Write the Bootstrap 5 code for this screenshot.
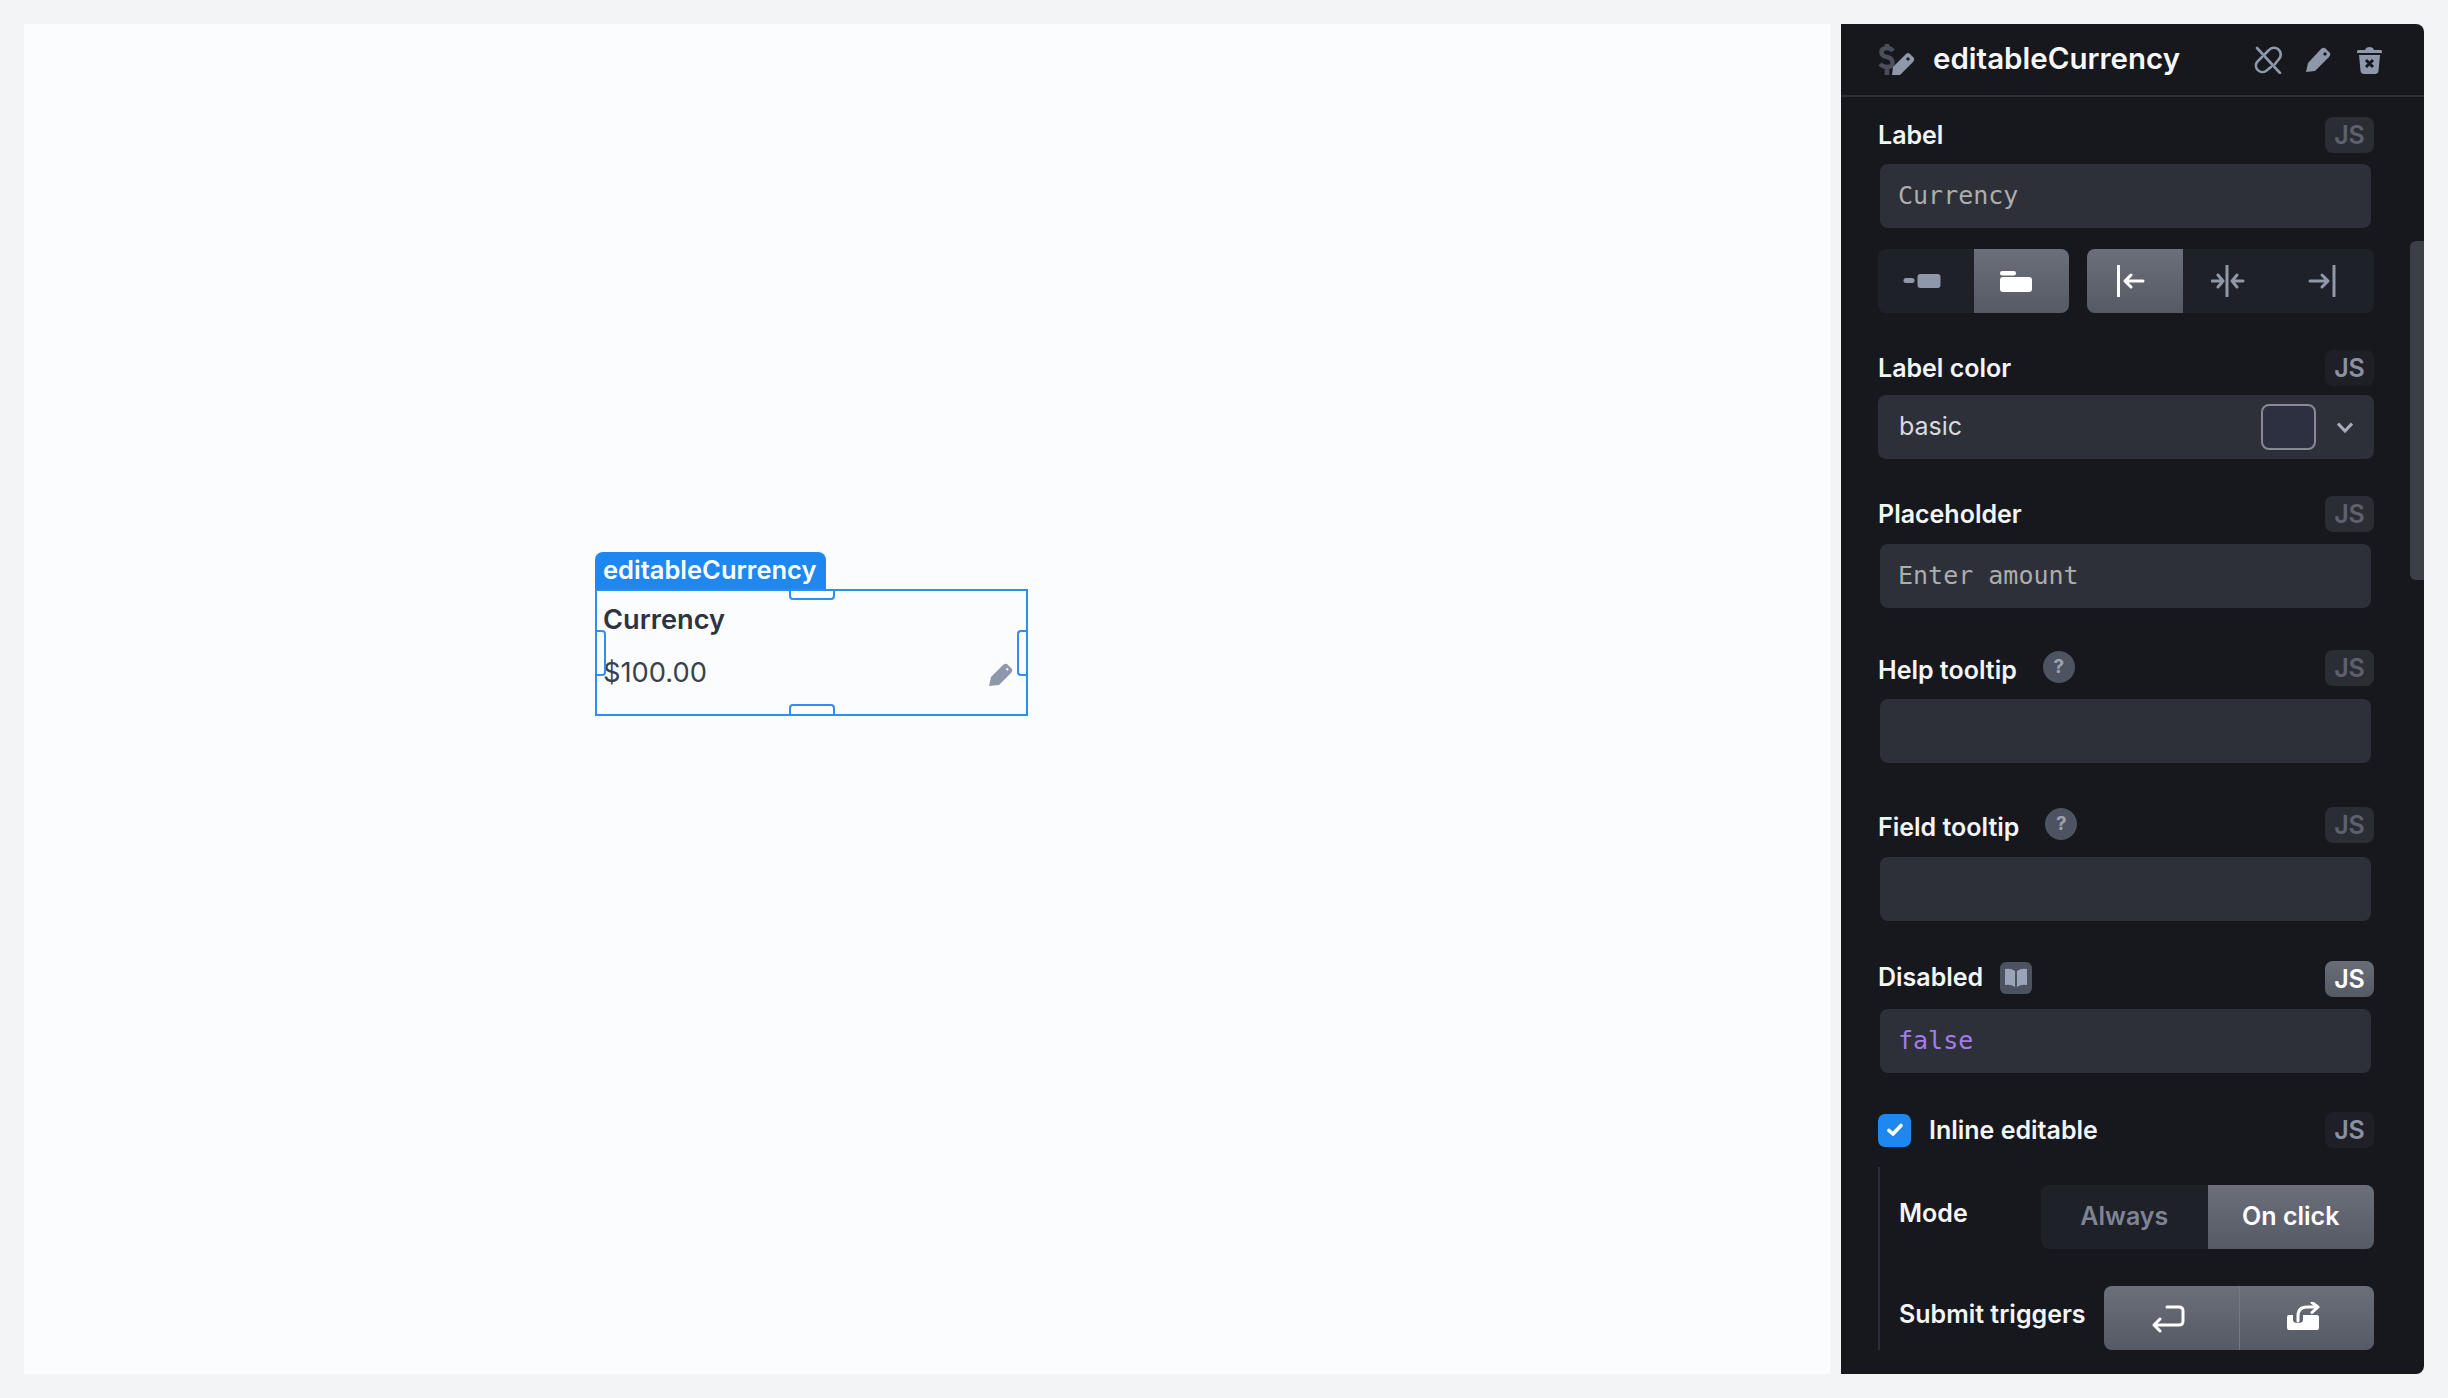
<!DOCTYPE html>
<html lang="en">
<head>
  <meta charset="UTF-8" />
  <title>editableCurrency</title>
  <link href="https://cdn.jsdelivr.net/npm/bootstrap@5.3.0/dist/css/bootstrap.min.css" rel="stylesheet"/>
  <style>
    html, body { height: 100%; }
    body {
      background: #f3f4f6;
      font-family: "Inter", "Liberation Sans", sans-serif;
      overflow: hidden;
    }
    .shell { height: 1398px; padding: 24px; gap: 11px; }
    .canvas-area { width: 1806px; background: #fbfcfe; position: relative; }

    /* widget on the canvas */
    .wd-tag {
      position: absolute; left: 571px; top: 528px; width: 231px; height: 37px;
      background: #1e88f0; color: #fff; font-size: 25.5px; font-weight: 600;
      border-radius: 8px 8px 0 0; padding-left: 8px; line-height: 36px;
    }
    .wd-box {
      position: absolute; left: 571px; top: 565px; width: 433px; height: 127px;
      border: 2px solid #2f8ef0; color: #2d3440; padding-left: 7px;
    }
    .wd-label { font-size: 27.2px; font-weight: 600; line-height: 32px; margin-top: 13px; margin-left: -1px; }
    .wd-value { font-size: 27.3px; line-height: 32px; margin-top: 21px; color: #3a404c; margin-left: -1px; }
    .wd-pencil { position: absolute; right: 13px; top: 72px; }
    .wd-grip { position: absolute; background: #fff; border: 2px solid #2f8ef0; border-radius: 4px; }
    .grip-top { left: 192px; top: 0; width: 46px; height: 9px; border-top: 0; border-radius: 0 0 4px 4px; }
    .grip-bottom { left: 192px; bottom: 0; width: 46px; height: 10px; border-bottom: 0; border-radius: 4px 4px 0 0; }
    .grip-left { left: 0; top: 39px; width: 9px; height: 46px; border-left: 0; background: transparent; border-radius: 0 4px 4px 0; }
    .grip-right { right: 0; top: 39px; width: 9px; height: 46px; border-right: 0; border-radius: 4px 0 0 4px; }

    /* right panel */
    .side-panel {
      width: 583px; background: #16181d; color: #f4f5f7; position: relative;
      border-radius: 0 8px 8px 0; overflow: hidden;
    }
    .panel-top {
      height: 73px; border-bottom: 2px solid #2b2f38; padding: 0 42px 0 37px;
    }
    .panel-title { font-size: 29.5px; font-weight: 600; margin: -2px 0 0 18px; color: #f6f7f8; }
    .panel-body { padding: 20px 50px 0 37px; }
    .scroll-thumb {
      position: absolute; right: 0; top: 217px; width: 14px; height: 339px;
      background: #3c3f47; border-radius: 6px 0 0 6px;
    }
    .prop-head { height: 36px; }
    .prop-name { font-size: 25px; font-weight: 600; line-height: 30px; }
    .name-low { margin-top: 4px; }
    .name-high { margin-top: -4px; }
    .js-btn {
      width: 49px; height: 36px; border-radius: 8px; font-size: 25px; font-weight: 600;
      line-height: 36px; text-align: center; margin-left: auto;
    }
    .js-off { background: #2b2d34; color: #5d616d; }
    .js-on { background: #1f2027; color: #8a90a0; }
    .js-set { background: linear-gradient(180deg, #696d77, #555a65); color: #fff; }
    .code-box {
      height: 64px; margin: 0 3px 0 2px; background: #2d3038; border-radius: 8px;
      font-family: "DejaVu Sans Mono", "Liberation Mono", monospace; font-size: 25px;
      color: #adadad; line-height: 64px; padding-left: 18px;
    }
    .code-false { color: #a47ce8; }
    .seg-wrap { height: 64px; background: #1f2128; border-radius: 8px; overflow: hidden; }
    .seg-cell { height: 100%; color: #8f98aa; }
    .seg-active {
      background: linear-gradient(180deg, #6b6f79, #555a65); color: #fff;
    }
    .seg-pos { width: 191px; margin-right: 18px; }
    .seg-align { width: 287px; }
    .swatch-box {
      width: 55px; height: 46px; border: 2px solid #868a95; border-radius: 8px;
      background: #2c3040; margin-left: auto; margin-right: 21px;
    }
    .select-box {
      height: 64px; background: #2d3038; border-radius: 8px; padding: 0 21px;
      font-size: 25px; color: #d8dadf;
    }
    .help-dot {
      width: 32px; height: 32px; border-radius: 50%; background: #4e5361; color: #9aa2b2;
      font-size: 19px; font-weight: 700; line-height: 32px; text-align: center;
      margin: -3px 0 0 26px;
    }
    .book-chip {
      width: 32px; height: 32px; border-radius: 6px; background: #4e5361; margin: -3px 0 0 17px;
    }
    .tick-box {
      width: 33px; height: 33px; border-radius: 7px; background: #1e88f0; margin-right: 18px;
    }
    .sub-group { border-left: 2px solid #2b2e36; padding: 18px 0 0 19px; height: 183px; }
    .sub-name { font-size: 25px; font-weight: 600; line-height: 30px; margin-top: 13px; }
    .seg-text { font-size: 25px; font-weight: 600; color: #7f8494; }
    .seg-text.seg-active { color: #fff; }
    .seg-split { border-left: 1px solid #757984; }
    .w-mode { width: 333px; }
    .w-submit { width: 270px; }
    .trash-gap { margin-left: 26px; }
    .mt-9 { margin-top: 9px; }
    .mt-11 { margin-top: 11px; }
    .mt-12 { margin-top: 12px; }
    .mt-13 { margin-top: 13px; }
    .mt-14 { margin-top: 14px; }
    .mt-19 { margin-top: 19px; }
    .mt-21 { margin-top: 21px; }
    .mt-37 { margin-top: 37px; }
    .mt-39 { margin-top: 39px; }
    .mt-40 { margin-top: 40px; }
    .mt-42 { margin-top: 42px; }
    .mt-44 { margin-top: 44px; }
  </style>
</head>
<body>

<div class="shell d-flex">
  <!-- Canvas -->
  <div class="canvas-area">
    <div class="wd-tag">editableCurrency</div>
    <div class="wd-box">
      <div class="wd-label">Currency</div>
      <div class="wd-value">$100.00</div>
      <svg class="wd-pencil" width="24" height="24" viewBox="0 0 24 24">
        <path d="M0 23 L2 14 L14 2 Q16 0 18 1 L23 6 Q24 8 22 10 L10 22 Z" fill="#8f98aa"/>
        <path d="M17.500 5.500 L19 7" stroke="#fbfcfe" stroke-width="2"/>
      </svg>
      <span class="wd-grip grip-top"></span>
      <span class="wd-grip grip-bottom"></span>
      <span class="wd-grip grip-left"></span>
      <span class="wd-grip grip-right"></span>
    </div>
  </div>

  <!-- Panel -->
  <div class="side-panel">
    <div class="panel-top d-flex align-items-center">
      <svg width="37" height="34" viewBox="0 0 37 34">
        <path d="M15 8 Q13 5 9 5 Q3.500 5 3.500 9.500 Q3.500 13 9 14 Q14.500 15 14.500 20 Q14.500 24 9 24 Q5 24 2 21 M9 1 V5 M9 24 V32" fill="none" stroke="#4a4f5b" stroke-width="4.500"/>
        <path d="M14 32 L15 24 L28 11 Q30 9 32 11 L36 15 Q37 17 35 19 L22 32 Z" fill="#8f98aa"/>
        <path d="M29 15 L31 17" stroke="#16181d" stroke-width="3"/>
      </svg>
      <span class="panel-title">editableCurrency</span>
      <div class="d-flex align-items-center ms-auto">
        <svg width="28" height="28" viewBox="0 0 28 28" fill="none" stroke="#8f98aa" stroke-width="2.600" stroke-linecap="round">
          <path d="M3 2 L26 27"/>
          <path d="M11 8 L15 4 A6.500 6.500 0 0 1 25 13 L21 18"/>
          <path d="M8 11 L3 16 A6.500 6.500 0 0 0 12 25 L17 21"/>
        </svg>
        <svg class="ms-4" width="25" height="25" viewBox="0 0 25 25">
          <path d="M0 25 L2 16 L15 2 Q17 0 19 1 L24 6 Q25 8 23 10 L9 24 Z" fill="#8f98aa"/>
          <path d="M18 6 L20 8" stroke="#16181d" stroke-width="3"/>
        </svg>
        <svg class="trash-gap" width="25" height="28" viewBox="0 0 25 28">
          <path d="M1 4 H8 Q9 1 12.500 1 Q16 1 17 4 H24 Q25 4 25 6 V7 H0 V6 Q0 4 1 4 Z" fill="#8f98aa"/>
          <path d="M2 9 H23 L21.500 25 Q21 28 18 28 H7 Q4 28 3.500 25 Z" fill="#8f98aa"/>
          <path d="M9 14 L16 21 M16 14 L9 21" stroke="#16181d" stroke-width="3"/>
        </svg>
      </div>
    </div>

    <div class="panel-body">
      <div class="prop-head d-flex align-items-center">
        <span class="prop-name">Label</span>
        <span class="js-btn js-off">JS</span>
      </div>
      <div class="code-box mt-11">Currency</div>

      <div class="d-flex mt-21">
        <div class="seg-wrap seg-pos d-flex">
          <div class="seg-cell w-50 d-flex align-items-center justify-content-center">
            <svg width="48" height="32" viewBox="0 0 48 32" fill="#8f98aa"><rect x="1.500" y="13" width="11" height="5" rx="2.500"/><rect x="15.500" y="9" width="23" height="14" rx="3"/></svg>
          </div>
          <div class="seg-cell seg-active w-50 d-flex align-items-center justify-content-center">
            <svg width="48" height="32" viewBox="0 0 48 32" fill="#fff"><rect x="3" y="6" width="16" height="4.500" rx="2.200"/><rect x="3" y="12" width="32" height="15" rx="3"/></svg>
          </div>
        </div>
        <div class="seg-wrap seg-align d-flex">
          <div class="seg-cell seg-active flex-fill d-flex align-items-center justify-content-center">
            <svg width="40" height="32" viewBox="0 0 40 32" fill="none" stroke="#fff" stroke-width="3" stroke-linecap="round" stroke-linejoin="round"><path d="M3.500 1 V31"/><path d="M10 16 H28 M16 10 L10 16 L16 22"/></svg>
          </div>
          <div class="seg-cell flex-fill d-flex align-items-center justify-content-center">
            <svg width="40" height="32" viewBox="0 0 40 32" fill="none" stroke="#8f98aa" stroke-width="3" stroke-linecap="round" stroke-linejoin="round"><path d="M16 1 V31"/><path d="M1 16 H12 M7 10 L12 16 L7 22"/><path d="M32 16 H21 M26 10 L21 16 L26 22"/></svg>
          </div>
          <div class="seg-cell flex-fill d-flex align-items-center justify-content-center">
            <svg width="40" height="32" viewBox="0 0 40 32" fill="none" stroke="#8f98aa" stroke-width="3" stroke-linecap="round" stroke-linejoin="round"><path d="M28 1 V31"/><path d="M4 16 H22 M16 10 L22 16 L16 22"/></svg>
          </div>
        </div>
      </div>

      <div class="prop-head d-flex align-items-center mt-37">
        <span class="prop-name">Label color</span>
        <span class="js-btn js-on">JS</span>
      </div>
      <div class="select-box d-flex align-items-center mt-9">
        <span>basic</span>
        <span class="swatch-box"></span>
        <svg width="16" height="11" viewBox="0 0 16 11" fill="none" stroke="#a8adb8" stroke-width="3"><path d="M1 1.500 L8 9 L15 1.500"/></svg>
      </div>

      <div class="prop-head d-flex align-items-center mt-37">
        <span class="prop-name">Placeholder</span>
        <span class="js-btn js-off">JS</span>
      </div>
      <div class="code-box mt-12">Enter amount</div>

      <div class="prop-head d-flex align-items-center mt-42">
        <span class="prop-name name-low">Help tooltip</span>
        <span class="help-dot">?</span>
        <span class="js-btn js-off">JS</span>
      </div>
      <div class="code-box mt-13"></div>

      <div class="prop-head d-flex align-items-center mt-44">
        <span class="prop-name name-low">Field tooltip</span>
        <span class="help-dot">?</span>
        <span class="js-btn js-off">JS</span>
      </div>
      <div class="code-box mt-14"></div>

      <div class="prop-head d-flex align-items-center mt-40">
        <span class="prop-name name-high">Disabled</span>
        <span class="book-chip d-flex align-items-center justify-content-center">
          <svg width="24" height="20" viewBox="0 0 24 20" fill="#9aa4b8"><path d="M1 1 Q7 0 11 3 V19 Q7 16 1 17 Z"/><path d="M23 1 Q17 0 13 3 V19 Q17 16 23 17 Z"/></svg>
        </span>
        <span class="js-btn js-set">JS</span>
      </div>
      <div class="code-box code-false mt-12">false</div>

      <div class="prop-head d-flex align-items-center mt-39">
        <span class="tick-box d-flex align-items-center justify-content-center">
          <svg width="16" height="14" viewBox="0 0 16 14" fill="none" stroke="#fff" stroke-width="3.600" stroke-linecap="round" stroke-linejoin="round"><path d="M2 7.500 L6 11 L14 2.500"/></svg>
        </span>
        <span class="prop-name">Inline editable</span>
        <span class="js-btn js-on">JS</span>
      </div>

      <div class="sub-group mt-19">
        <div class="d-flex align-items-start">
          <span class="sub-name">Mode</span>
          <div class="seg-wrap d-flex ms-auto w-mode">
            <div class="seg-cell seg-text d-flex align-items-center justify-content-center w-50">Always</div>
            <div class="seg-cell seg-text seg-active d-flex align-items-center justify-content-center w-50">On click</div>
          </div>
        </div>
        <div class="d-flex align-items-start mt-37">
          <span class="sub-name">Submit triggers</span>
          <div class="seg-wrap d-flex ms-auto w-submit">
            <div class="seg-cell seg-active d-flex align-items-center justify-content-center w-50">
              <svg width="40" height="32" viewBox="0 0 40 32" fill="none" stroke="#fff" stroke-width="3" stroke-linecap="round" stroke-linejoin="round"><path d="M15 5 H27 Q31 5 31 9 V19 Q31 23 27 23 H2 M8 17 L2 23 L8 29"/></svg>
            </div>
            <div class="seg-cell seg-active seg-split d-flex align-items-center justify-content-center w-50">
              <svg width="40" height="32" viewBox="0 0 40 32">
                <path d="M2 13 H6 V18 Q6 21 11 21 Q16 21 16 18 V13 H30 Q32 13 32 15 V26 Q32 28 30 28 H2 Q0 28 0 26 V15 Q0 13 2 13 Z" fill="#fff"/>
                <path d="M11 19 V14 Q11 5 20 5 H30 M25 0.500 L31 5 L25 10.500" fill="none" stroke="#fff" stroke-width="3" stroke-linecap="round" stroke-linejoin="round"/>
              </svg>
            </div>
          </div>
        </div>
      </div>
    </div>

    <div class="scroll-thumb"></div>
  </div>
</div>

<script src="https://cdn.jsdelivr.net/npm/bootstrap@5.3.0/dist/js/bootstrap.bundle.min.js"></script>
</body>
</html>
